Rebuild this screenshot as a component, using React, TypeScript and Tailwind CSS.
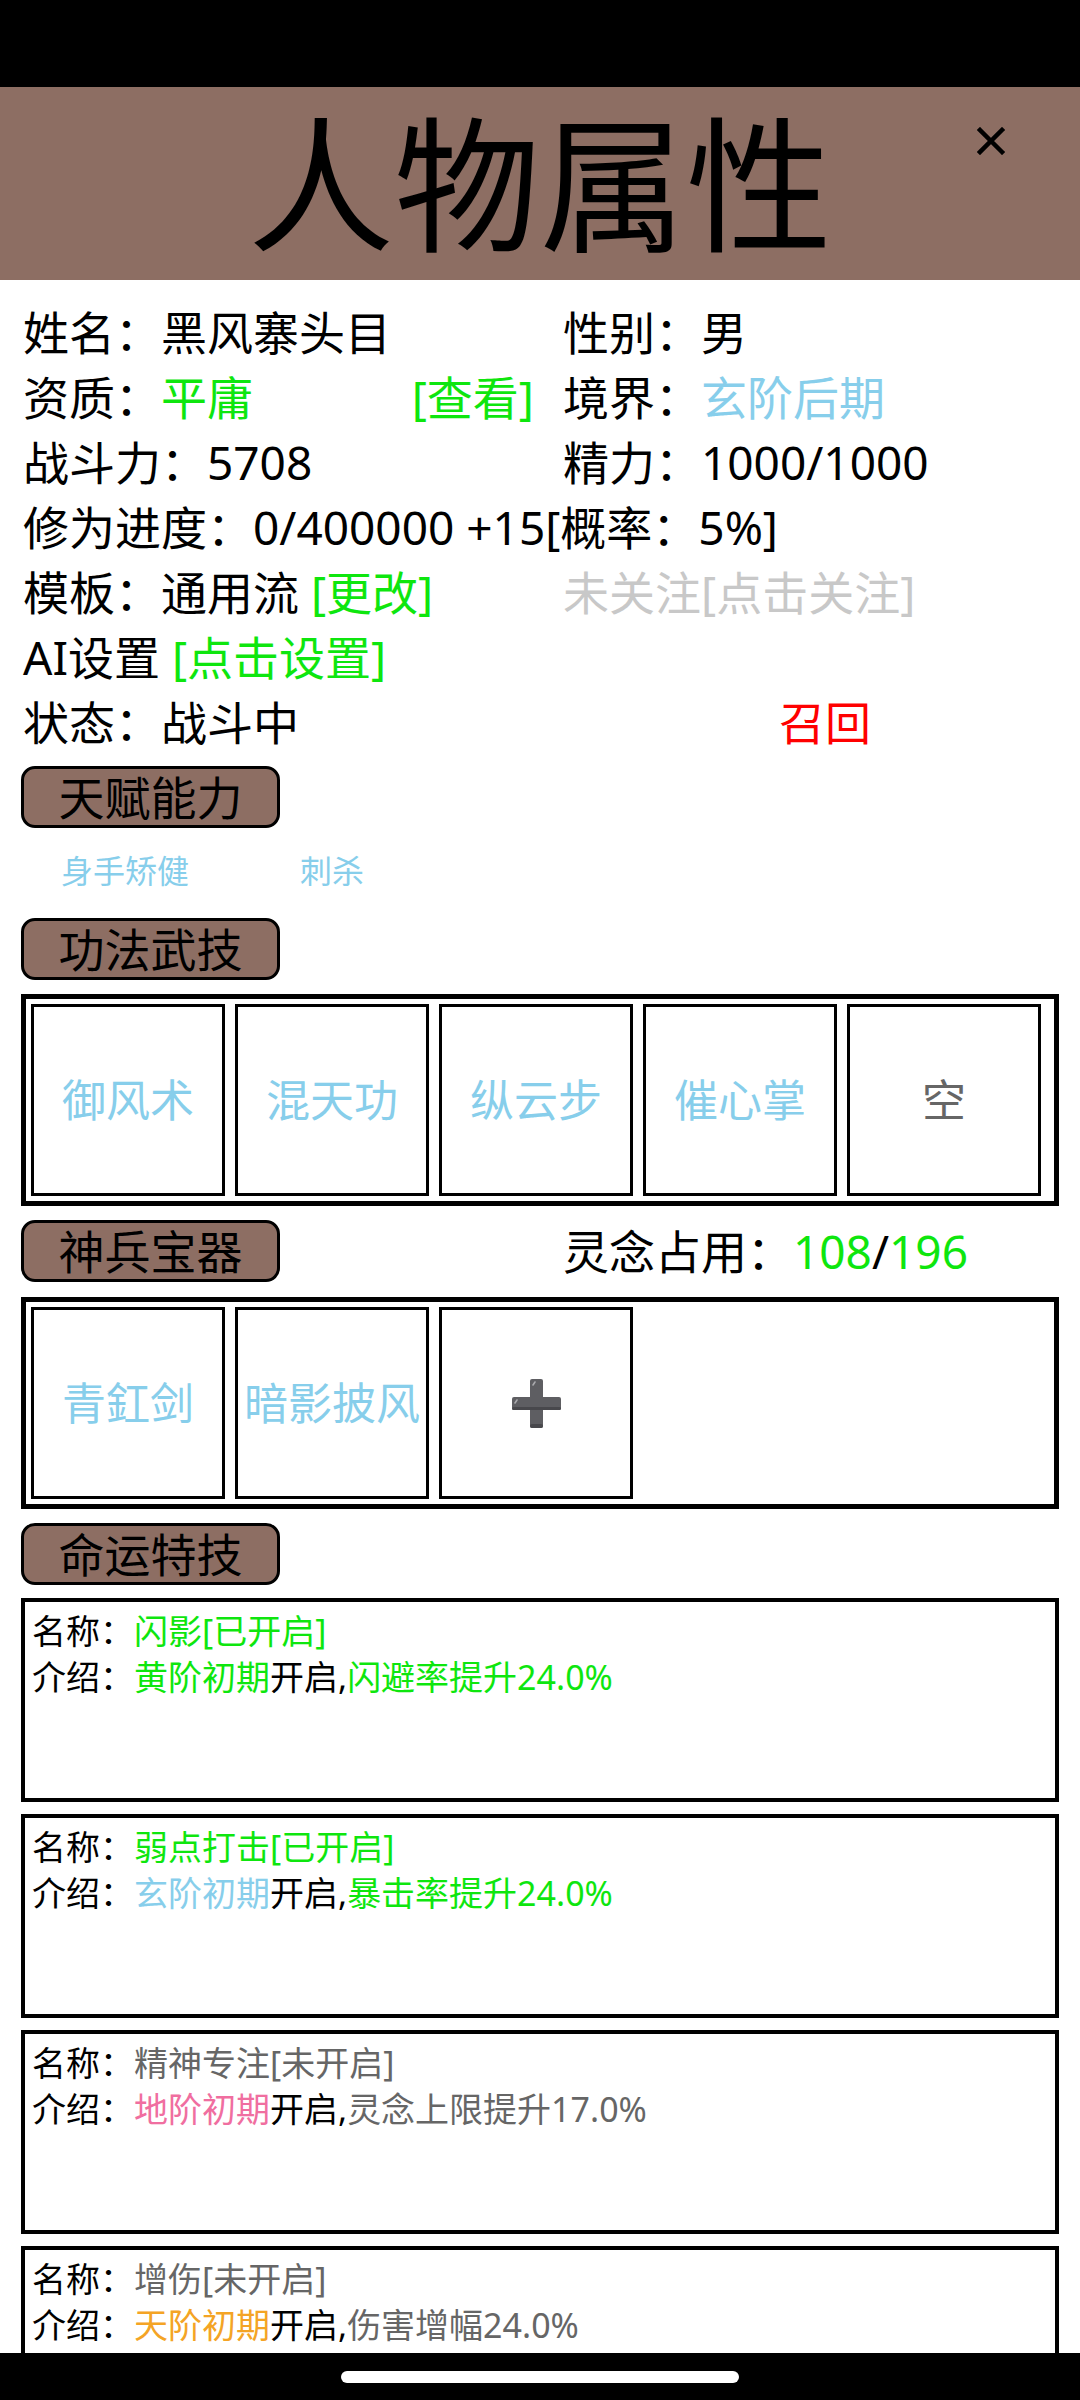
import React from 'react';

const GREEN = 'text-[#0ee60e]';
const BLUE = 'text-[#87ceeb]';

const SectionTag: React.FC<{ label: string }> = ({ label }) => (
  <div className="ml-[21px] flex h-[62px] w-[259px] shrink-0 items-center justify-center rounded-[14px] border-[3px] border-black bg-[#8d6e63] text-[46px] leading-none text-black">
    {label}
  </div>
);

const Slot: React.FC<{ children?: React.ReactNode; className?: string }> = ({ children, className }) => (
  <div
    className={`flex h-[192px] w-[194px] shrink-0 items-center justify-center border-[3px] border-black text-[44px] leading-none ${className ?? ''}`}
  >
    {children}
  </div>
);

const PlusIcon = () => (
  <svg width="49" height="49" viewBox="0 0 49 49">
    <rect x="18" y="0" width="13" height="49" rx="2" fill="#5e5e62" />
    <rect x="0" y="18" width="49" height="13" rx="2" fill="#5e5e62" />
    <rect x="18" y="45" width="13" height="4" rx="2" fill="#48484c" />
    <rect x="0" y="28" width="49" height="3" rx="1.5" fill="#48484c" />
    <path d="M21 6 L23 3" stroke="#a9a9ad" strokeWidth="1.6" strokeLinecap="round" />
    <path d="M3 24 L5 21" stroke="#a9a9ad" strokeWidth="1.6" strokeLinecap="round" />
  </svg>
);

interface FateSkill {
  name: string;
  opened: boolean;
  realm: string;
  realmColor: string;
  effect: string;
}

const fateSkills: FateSkill[] = [
  { name: '闪影', opened: true, realm: '黄阶初期', realmColor: GREEN, effect: '闪避率提升24.0%' },
  { name: '弱点打击', opened: true, realm: '玄阶初期', realmColor: BLUE, effect: '暴击率提升24.0%' },
  { name: '精神专注', opened: false, realm: '地阶初期', realmColor: 'text-[#f06ea0]', effect: '灵念上限提升17.0%' },
  { name: '增伤', opened: false, realm: '天阶初期', realmColor: 'text-[#f4a425]', effect: '伤害增幅24.0%' },
];

const FateCard: React.FC<{ skill: FateSkill }> = ({ skill }) => {
  const tone = skill.opened ? GREEN : 'text-[#666666]';
  return (
    <div className="mx-[21px] h-[204px] shrink-0 border-[4px] border-black pl-[7px] pt-[6px] text-[34px] leading-[46px]">
      <div className="whitespace-nowrap">
        <span className="text-black">名称：</span>
        <span className={tone}>
          {skill.name}[{skill.opened ? '已开启' : '未开启'}]
        </span>
      </div>
      <div className="whitespace-nowrap">
        <span className="text-black">介绍：</span>
        <span className={skill.realmColor}>{skill.realm}</span>
        <span className="text-black">开启,</span>
        <span className={tone}>{skill.effect}</span>
      </div>
    </div>
  );
};

export default function App() {
  return (
    <div
      className="relative h-[2400px] w-[1080px] overflow-hidden bg-white text-black"
      style={{ fontFamily: '"Noto Sans", "Noto Sans CJK SC", sans-serif' }}
    >
      {/* status bar */}
      <div className="h-[87px] bg-black" />

      {/* header */}
      <div className="relative flex h-[193px] items-center justify-center bg-[#8d6e63]">
        <span className="text-[146px] leading-none">人物属性</span>
        <button className="absolute left-[977px] top-[40px] h-[28px] w-[28px]">
          <svg width="28" height="28" viewBox="0 0 28 28">
            <path d="M3 3 L25 25 M25 3 L3 25" stroke="#000" strokeWidth="4.5" strokeLinecap="square" />
          </svg>
        </button>
      </div>

      {/* info */}
      <div className="pt-[20px] text-[46px] leading-[65px]">
        <div className="flex h-[65px]">
          <div className="w-[540px] pl-[23px]">姓名：黑风寨头目</div>
          <div className="pl-[23px]">性别：男</div>
        </div>
        <div className="flex h-[65px]">
          <div className="flex w-[540px] justify-between pl-[23px] pr-[6px]">
            <span>
              资质：<span className={GREEN}>平庸</span>
            </span>
            <span className={GREEN}>[查看]</span>
          </div>
          <div className="pl-[23px]">
            境界：<span className={BLUE}>玄阶后期</span>
          </div>
        </div>
        <div className="flex h-[65px]">
          <div className="w-[540px] pl-[23px]">战斗力：5708</div>
          <div className="pl-[23px]">精力：1000/1000</div>
        </div>
        <div className="h-[65px] whitespace-nowrap pl-[23px]">修为进度：0/400000 +15[概率：5%]</div>
        <div className="flex h-[65px]">
          <div className="w-[540px] pl-[23px]">
            模板：通用流 <span className={GREEN}>[更改]</span>
          </div>
          <div className="pl-[23px] text-[#c8c8c8]">未关注[点击关注]</div>
        </div>
        <div className="h-[65px] pl-[23px]">
          AI设置 <span className={GREEN}>[点击设置]</span>
        </div>
        <div className="flex h-[65px]">
          <div className="w-[540px] pl-[23px]">状态：战斗中</div>
          <div className="pl-[239px] text-[#ff0000]">召回</div>
        </div>
      </div>

      {/* talents */}
      <div className="mt-[11px]">
        <SectionTag label="天赋能力" />
      </div>
      <div className={`mt-[19px] flex h-[48px] pl-[61px] text-[32px] leading-[48px] ${BLUE}`}>
        <div className="w-[239px]">身手矫健</div>
        <div className="w-[239px]">刺杀</div>
      </div>

      {/* skills */}
      <div className="mt-[23px]">
        <SectionTag label="功法武技" />
      </div>
      <div className="mx-[21px] mt-[14px] flex gap-[10px] border-[5px] border-black px-[5px] py-[5px]">
        <Slot className={BLUE}>御风术</Slot>
        <Slot className={BLUE}>混天功</Slot>
        <Slot className={BLUE}>纵云步</Slot>
        <Slot className={BLUE}>催心掌</Slot>
        <Slot className="text-[#666666]">空</Slot>
      </div>

      {/* treasures */}
      <div className="mt-[14px] flex items-center">
        <SectionTag label="神兵宝器" />
        <div className="ml-[283px] text-[46px] leading-none">
          灵念占用：<span className={GREEN}>108</span>/<span className={GREEN}>196</span>
        </div>
      </div>
      <div className="mx-[21px] mt-[15px] flex gap-[10px] border-[5px] border-black px-[5px] py-[5px]">
        <Slot className={BLUE}>青釭剑</Slot>
        <Slot className={BLUE}>暗影披风</Slot>
        <Slot>
          <PlusIcon />
        </Slot>
      </div>

      {/* fate skills */}
      <div className="mt-[14px]">
        <SectionTag label="命运特技" />
      </div>
      <div className="mt-[13px] flex flex-col gap-[12px]">
        {fateSkills.map((s) => (
          <FateCard key={s.name} skill={s} />
        ))}
      </div>

      {/* navigation bar */}
      <div className="absolute bottom-0 left-0 flex h-[47px] w-full items-center justify-center bg-black">
        <div className="h-[12px] w-[398px] rounded-full bg-white" />
      </div>
    </div>
  );
}
